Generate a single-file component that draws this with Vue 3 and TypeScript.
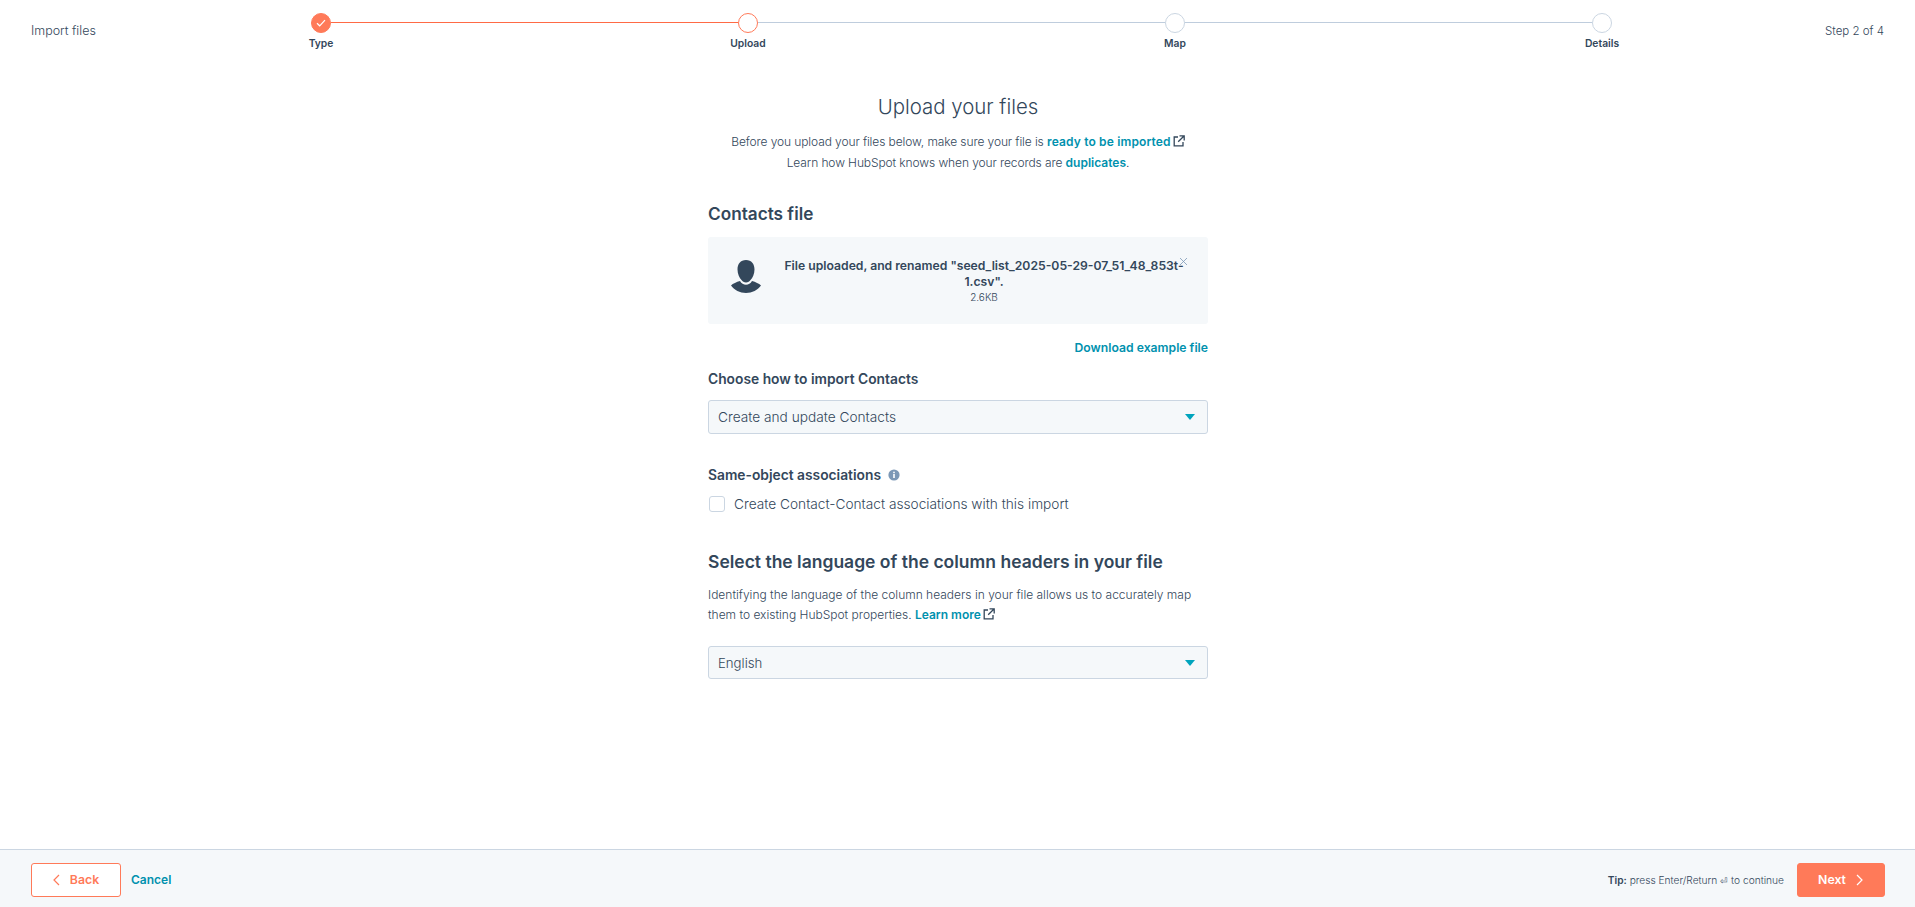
<script setup lang="ts">
interface Step { label: string; state: 'done' | 'active' | 'todo' }
const steps: Step[] = [
  { label: 'Type', state: 'done' },
  { label: 'Upload', state: 'active' },
  { label: 'Map', state: 'todo' },
  { label: 'Details', state: 'todo' },
]
</script>

<template>
  <div class="page">
    <header class="top">
      <div class="top-title">Import files</div>
      <ol class="stepper">
        <li v-for="(s, i) in steps" :key="s.label" class="step" :class="[s.state, { last: i === steps.length - 1 }]">
          <div class="track">
            <span class="dot">
              <svg v-if="s.state === 'done'" width="10" height="8" viewBox="0 0 10 8" fill="none"><path d="M1 4.2 3.7 6.8 9 1.2" stroke="#fff" stroke-width="1.2" /></svg>
            </span>
            <span v-if="i < steps.length - 1" class="line"></span>
          </div>
          <div class="step-label"><span>{{ s.label }}</span></div>
        </li>
      </ol>
      <div class="top-count">Step 2 of 4</div>
    </header>

    <main class="main">
      <div class="column">
        <h1 class="title">Upload your files</h1>
        <p class="intro">
          Before you upload your files below, make sure your file is <a class="link wide">ready to be imported</a>
          <svg class="ext" viewBox="0 0 12 12" width="12" height="12" fill="none" stroke="#33475b" stroke-width="1.3"><path d="M5 2H1.2v8.8H10V7" /><path d="M6.5.8h4.7v4.7M11 1 5.2 6.8" /></svg>
        </p>
        <p class="intro">Learn how HubSpot knows when your records are <a class="link">duplicates</a>.</p>

        <h2 class="section first">Contacts file</h2>
        <div class="file-card">
          <svg class="person" width="30" height="33" viewBox="0 0 30 33">
            <path fill="#33475b" d="M15 0C20.5 0 23.500 4 23.500 9.500C23.500 14 21.500 18 19.500 20C18.500 21.500 17 22.500 15 22.500C13 22.500 11.500 21.500 10.500 20C8.500 18 6.500 14 6.500 9.500C6.500 4 9.500 0 15 0Z"/>
            <path fill="#33475b" d="M9 21C10.500 23.500 12.500 24.800 15 24.800C17.500 24.800 19.500 23.500 21 21C24.500 22 28 23.500 30 25.500C27 30 21 33 15 33C9 33 3 30 0 25.500C2 23.500 5.500 22 9 21Z"/>
          </svg>
          <div class="file-text">
            <div class="file-name">File uploaded, and renamed "seed_list_2025-05-29-07_51_48_853t-1.csv".</div>
            <div class="file-size">2.6KB</div>
          </div>
          <svg class="close" width="9" height="9" viewBox="0 0 9 9" fill="none" stroke="#7c98b6" stroke-width=".8"><path d="M1 1l7 7M8 1 1 8" /></svg>
        </div>

        <div class="download"><a class="link">Download example file</a></div>

        <label class="label choose">Choose how to import Contacts</label>
        <div class="select">
          <span>Create and update Contacts</span>
          <span class="caret"></span>
        </div>

        <div class="label same">
          Same-object associations
          <svg class="info" width="12" height="12" viewBox="0 0 12 12"><circle cx="6" cy="6" r="5.600" fill="#7c98b6" /><rect x="5.200" y="5" width="1.600" height="4" fill="#fff" /><rect x="5.200" y="2.700" width="1.600" height="1.500" fill="#fff" /></svg>
        </div>
        <label class="check-row">
          <span class="checkbox"></span>
          <span>Create Contact-Contact associations with this import</span>
        </label>

        <h2 class="section lang">Select the language of the column headers in your file</h2>
        <p class="help">
          Identifying the language of the column headers in your file allows us to accurately map them to existing HubSpot properties.
          <a class="link">Learn more</a>
          <svg class="ext" viewBox="0 0 12 12" width="12" height="12" fill="none" stroke="#33475b" stroke-width="1.3"><path d="M5 2H1.2v8.8H10V7" /><path d="M6.5.8h4.7v4.7M11 1 5.2 6.8" /></svg>
        </p>
        <div class="select lang-select">
          <span>English</span>
          <span class="caret"></span>
        </div>
      </div>
    </main>

    <footer class="bottom">
      <div class="bottom-left">
        <button class="btn back" type="button">
          <svg width="7" height="12" viewBox="0 0 7 12" fill="none" stroke="#ff7a59" stroke-width="1.200"><path d="M6 1 1 6l5 5" /></svg>
          <span>Back</span>
        </button>
        <a class="link cancel">Cancel</a>
      </div>
      <div class="bottom-right">
        <span class="tip"><b>Tip:</b> press Enter/Return <span class="enter">⏎</span> to continue</span>
        <button class="btn next" type="button">
          <span>Next</span>
          <svg width="7" height="12" viewBox="0 0 7 12" fill="none" stroke="#fff" stroke-width="1.200"><path d="m1 1 5 5-5 5" /></svg>
        </button>
      </div>
    </footer>
  </div>
</template>

<style>
html, body { margin: 0; background: #fff; }
</style>

<style scoped>
.page {
  height: 907px;
  display: flex;
  flex-direction: column;
  overflow: hidden;
  font-family: Inter, "Open Sans", sans-serif;
  font-weight: 300;
  color: #33475b;
  font-size: 12.500px;
}
.top {
  height: 60px;
  display: grid;
  grid-template-columns: 311px 1301px 1fr;
  flex: none;
}
.top-title { padding: 23px 0 0 31px; font-size: 12.500px; line-height: 16px; }
.top-count { padding: 23px 31px 0 0; text-align: right; font-size: 11.500px; line-height: 16px; }
.stepper {
  list-style: none;
  margin: 0;
  padding: 12px 0 0;
  display: flex;
}
.step { flex: 1; min-width: 0; }
.step.last { flex: 0 0 20px; }
.track { display: flex; align-items: center; height: 21px; }
.dot {
  flex: none;
  box-sizing: border-box;
  width: 20px;
  height: 20px;
  border-radius: 50%;
  border: 1px solid #cbd6e2;
  background: #fff;
  display: flex;
  align-items: center;
  justify-content: center;
}
.line { flex: 1; height: 1px; background: #bfcddd; }
.done .dot { background: #ff7a59; border-color: #ff7a59; }
.done .line { background: #ff6a45; }
.active .dot { border-color: #ff7a59; }
.step-label {
  width: 20px;
  display: flex;
  justify-content: center;
  white-space: nowrap;
  margin-top: 3px;
  font-size: 10.300px;
  line-height: 14px;
  font-weight: 600;
}
.main { flex: 1; min-height: 0; }
.column { width: 500px; margin: 0 auto; padding-left: 1px; }
.title {
  margin: 33px 0 0;
  font-size: 20.400px;
  line-height: 28px;
  font-weight: 300;
  text-align: center;
}
.intro {
  margin: 0;
  text-align: center;
  font-size: 12px;
  line-height: 21px;
  letter-spacing: -0.1px;
}
.intro:nth-of-type(1) { margin-top: 10px; }
.link { color: #0091ae; font-weight: 600; letter-spacing: 0; }
.wide { letter-spacing: 0.15px; }
.ext { vertical-align: -1px; margin-left: 2px; }
.section { margin: 0; font-weight: 600; color: #33475b; }
.section.first { font-size: 17.200px; line-height: 22px; margin-top: 30px; }
.file-card {
  position: relative;
  margin-top: 12px;
  height: 87px;
  background: #f5f8fa;
  border-radius: 3px;
  display: flex;
  align-items: center;
  padding: 0 21px 0 23px;
  box-sizing: border-box;
}
.person { flex: none; margin-bottom: 8px; }
.file-text { flex: 1; text-align: center; padding-left: 20px; }
.file-name { font-size: 12.200px; line-height: 16px; font-weight: 600; }
.file-size { font-size: 10px; line-height: 14px; }
.close { position: absolute; top: 20px; right: 20px; }
.download { text-align: right; margin-top: 16px; font-size: 12.200px; line-height: 16px; }
.label { font-weight: 600; font-size: 13.800px; line-height: 18px; }
.choose { display: block; margin-top: 14px; }
.select {
  margin-top: 12px;
  height: 34px;
  box-sizing: border-box;
  border: 1px solid #cbd6e2;
  border-radius: 3px;
  background: #f5f8fa;
  padding: 0 9px;
  display: flex;
  align-items: center;
  justify-content: space-between;
  font-size: 13.700px;
}
.caret {
  width: 0;
  height: 0;
  border-left: 5.500px solid transparent;
  border-right: 5.500px solid transparent;
  border-top: 6px solid #00a4bd;
  margin-right: 3px;
}
.same { margin-top: 32px; display: flex; align-items: center; gap: 7px; }
.check-row { display: flex; align-items: center; gap: 9px; margin-top: 11px; font-size: 13.700px; line-height: 18px; }
.checkbox {
  width: 16px;
  height: 16px;
  box-sizing: border-box;
  border: 1px solid #cbd6e2;
  border-radius: 3px;
  background: #fff;
  margin-left: 1px;
}
.section.lang { font-size: 17.500px; line-height: 22px; margin-top: 38px; }
.help { margin: 12px 0 0; font-size: 12px; line-height: 20px; }
.lang-select { margin-top: 21px; height: 33px; font-size: 13.200px; }
.bottom {
  flex: none;
  height: 58px;
  box-sizing: border-box;
  border-top: 1px solid #cbd6e2;
  background: #f5f8fa;
  display: flex;
  justify-content: space-between;
  align-items: center;
  padding: 2px 30px 0 31px;
}
.bottom-left, .bottom-right { display: flex; align-items: center; }
.btn {
  height: 34px;
  box-sizing: border-box;
  border-radius: 3px;
  font-family: inherit;
  font-weight: 600;
  font-size: 12.300px;
  display: flex;
  align-items: center;
  justify-content: center;
  gap: 10px;
  padding: 0;
}
.back { width: 90px; background: #fff; border: 1px solid #ff7a59; color: #ff7a59; }
.cancel { margin-left: 10px; font-size: 12px; }
.next { width: 88px; background: #ff7a59; border: 1px solid #ff7a59; color: #fff; padding-right: 1px; }
.tip { font-size: 10.200px; margin-right: 13px; }
.tip b { font-weight: 600; }
.enter { font-family: "DejaVu Sans", sans-serif; font-size: 9px; }
</style>
